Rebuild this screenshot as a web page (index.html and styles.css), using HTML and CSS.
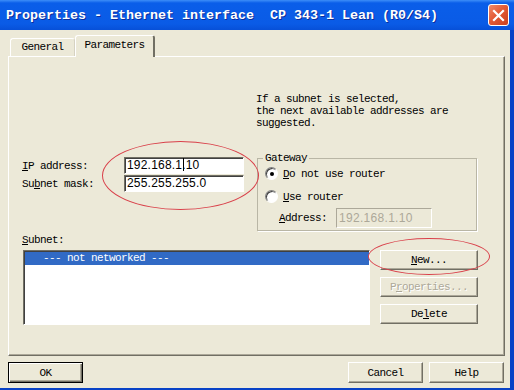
FILE: index.html
```html
<!DOCTYPE html>
<html lang="en">
<head>
    <meta charset="UTF-8">
    <title>Properties - Ethernet interface</title>
    <link rel="stylesheet" href="styles.css">
</head>
<body>
    <div class="window">
        <div class="titlebar">
            <span class="title">Properties - Ethernet interface&nbsp; CP 343-1 Lean (R0/S4)</span>
            <span class="close">
                <svg width="13" height="13" viewBox="0 0 13 13">
                    <path d="M2 2 L11 11 M11 2 L2 11" stroke="#fff" stroke-width="2.2" stroke-linecap="square"/>
                </svg>
            </span>
        </div>

        <div class="client">
            <div class="tabs">
                <div class="tab">General</div>
                <div class="tab active">Parameters</div>
            </div>

            <div class="panel">
                <p class="hint">If a subnet is selected,<br>the next available addresses are<br>suggested.</p>

                <div class="addr-row">
                    <div class="addr-fields">
                        <label><u>I</u>P address:</label>
                        <div class="edit">192.168.1<span class="caret"></span>.10</div>
                        <label>Su<u>b</u>net mask:</label>
                        <div class="edit">255.255.255.0</div>
                    </div>

                    <fieldset class="gateway">
                        <legend>Gateway</legend>
                        <div class="radio-row">
                            <span class="radio checked"></span>
                            <span><u>D</u>o not use router</span>
                        </div>
                        <div class="radio-row second">
                            <span class="radio"></span>
                            <span><u>U</u>se router</span>
                        </div>
                        <div class="router-row">
                            <label><u>A</u>ddress:</label>
                            <div class="edit disabled">192.168.1.10</div>
                        </div>
                    </fieldset>
                </div>

                <label class="subnet-label"><u>S</u>ubnet:</label>
                <div class="subnet-row">
                    <div class="listbox">
                        <div class="item selected">--- not networked ---</div>
                    </div>
                    <div class="side-buttons">
                        <button class="btn"><u>N</u>ew...</button>
                        <button class="btn disabled">P<u>r</u>operties...</button>
                        <button class="btn">De<u>l</u>ete</button>
                    </div>
                </div>

                <!-- red hand-drawn marks over the screenshot -->
                <span class="mark mark-ip"></span>
                <span class="mark mark-new"></span>
            </div>

            <div class="footer">
                <button class="btn default">OK</button>
                <div class="footer-right">
                    <button class="btn">Cancel</button>
                    <button class="btn">Help</button>
                </div>
            </div>
        </div>
    </div>
</body>
</html>
```

FILE: styles.css
```css
* {
    box-sizing: border-box;
}
body {
    margin: 0;
    background-color: #ece9d8;
    font-family: "Liberation Mono", "DejaVu Sans Mono", monospace;
    font-size: 11px;
    letter-spacing: -0.6px;
    color: #000;
}
.window {
    width: 514px;
    height: 390px;
    display: flex;
    flex-direction: column;
    overflow: hidden;
}
.titlebar {
    height: 30px;
    flex: none;
    display: flex;
    align-items: center;
    justify-content: space-between;
    padding: 0 5px 0 6px;
    background: linear-gradient(#3d8ef8 0, #0a5ee9 3px, #0a5be6 80%, #0750d8 100%);
}
.title {
    color: #fff;
    font-size: 13.33px;
    font-weight: bold;
    letter-spacing: 0;
    white-space: pre;
    text-shadow: 1px 1px 0 #0b2e9c;
    margin-top: 1px;
}
.close {
    width: 21px;
    height: 22px;
    display: flex;
    align-items: center;
    justify-content: center;
    border: 1px solid #fff;
    border-radius: 3px;
    background: linear-gradient(135deg, #f08a6a 0, #e35b36 45%, #c9401f 100%);
}
.client {
    flex: 1;
    border-right: 4px solid #0842c6;
    border-bottom: 2px solid #0842c6;
}
.tabs {
    display: flex;
    align-items: flex-end;
    height: 26px;
    padding-left: 10px;
}
.tab {
    height: 18px;
    width: 65px;
    line-height: 16px;
    text-align: center;
    border: 1px solid #fff;
    border-bottom: none;
    border-right-color: #d6d2c2;
    border-radius: 3px 3px 0 0;
    background-color: #ece9d8;
}
.tab.active {
    height: 22px;
    width: 80px;
    line-height: 18px;
    margin-bottom: -1px;
    border-right: 2px solid #716f64;
    position: relative;
    z-index: 1;
}
.panel {
    position: relative;
    margin-left: 8px;
    width: 497px;
    height: 300px;
    border: 1px solid;
    border-color: #fff #716f64 #716f64 #fff;
    box-shadow: inset -1px -1px 0 #aca899;
}
.hint {
    margin: 36px 0 0 247px;
    line-height: 12px;
}
.addr-row {
    display: flex;
    align-items: flex-start;
    margin-top: 23px;
}
.addr-fields {
    display: grid;
    grid-template-columns: 102px 120px;
    grid-auto-rows: 17px;
    row-gap: 1px;
    align-items: center;
    margin: 5px 0 0 13px;
}
.edit {
    height: 17px;
    border: 1px solid;
    border-color: #716f64 #fff #fff #716f64;
    box-shadow: inset 1px 1px 0 #404040;
    background-color: #fff;
    font-family: "Liberation Sans", Arial, sans-serif;
    font-size: 12px;
    letter-spacing: 0.2px;
    line-height: 15px;
    padding-left: 2px;
    white-space: nowrap;
}
.caret {
    display: inline-block;
    width: 1px;
    height: 13px;
    background-color: #000;
    vertical-align: -2px;
    margin: 0 -2px 0 1px;
}
.edit.disabled {
    width: 96px;
    height: 20px;
    line-height: 18px;
    font-size: 12px;
    letter-spacing: 0.3px;
    color: #aca899;
    background-color: #ece9d8;
    border-color: #aca899 #fff #fff #aca899;
    box-shadow: none;
}
.gateway {
    margin: 0 0 0 13px;
    padding: 3px 0 2px 0;
    width: 220px;
    min-width: 0;
    border: 1px solid #b9b6a5;
    box-shadow: 1px 1px 0 #fff;
}
.gateway legend {
    margin-left: 5px;
    padding: 0 2px;
    line-height: 12px;
}
.radio-row {
    display: flex;
    align-items: center;
    gap: 5px;
    height: 13px;
    margin-left: 7px;
}
.radio-row.second {
    margin-top: 10px;
}
.radio {
    width: 13px;
    height: 13px;
    border-radius: 50%;
    border: 1px solid;
    border-color: #808080 #fff #fff #808080;
    background-color: #fff;
    box-shadow: inset 1px 1px 0 #404040;
    display: flex;
    align-items: center;
    justify-content: center;
}
.radio.checked::after {
    content: "";
    width: 4px;
    height: 4px;
    border-radius: 50%;
    background-color: #000;
}
.router-row {
    display: flex;
    align-items: center;
    gap: 9px;
    margin: 5px 0 0 21px;
}
.subnet-label {
    display: block;
    margin: 3px 0 0 13px;
    line-height: 12px;
}
.subnet-row {
    display: flex;
    margin-top: 4px;
}
.listbox {
    margin-left: 14px;
    width: 347px;
    height: 75px;
    background-color: #fff;
    border: 1px solid;
    border-color: #716f64 #fff #fff #716f64;
    box-shadow: inset 1px 1px 0 #404040;
    padding: 1px 0 0 1px;
}
.item {
    height: 13px;
    line-height: 13px;
    padding-left: 18px;
}
.item.selected {
    background-color: #316ac5;
    color: #fff;
}
.side-buttons {
    display: flex;
    flex-direction: column;
    gap: 7px;
    margin-left: 10px;
}
.btn {
    font-family: inherit;
    font-size: 11px;
    letter-spacing: -0.6px;
    color: #000;
    width: 98px;
    height: 20px;
    padding: 0;
    background-color: #ece9d8;
    border: 1px solid;
    border-color: #fff #716f64 #716f64 #fff;
    box-shadow: inset -1px -1px 0 #aca899;
}
.btn.disabled {
    color: #aca899;
    text-shadow: 1px 1px 0 #fff;
}
.footer {
    display: flex;
    justify-content: space-between;
    margin-top: 6px;
    padding: 0 6px 0 8px;
}
.footer .btn {
    width: 75px;
    height: 21px;
}
.footer-right {
    display: flex;
    gap: 6px;
}
.btn.default {
    border: 1px solid #000;
    box-shadow: inset 1px 1px 0 #fff, inset -1px -1px 0 #716f64, inset -2px -2px 0 #aca899;
}
.mark {
    position: absolute;
    border: 1.2px solid #d9404a;
    border-radius: 50%;
    pointer-events: none;
}
.mark-ip {
    left: 93px;
    top: 84px;
    width: 157px;
    height: 69px;
}
.mark-new {
    left: 359px;
    top: 181px;
    width: 122px;
    height: 37px;
}
```
